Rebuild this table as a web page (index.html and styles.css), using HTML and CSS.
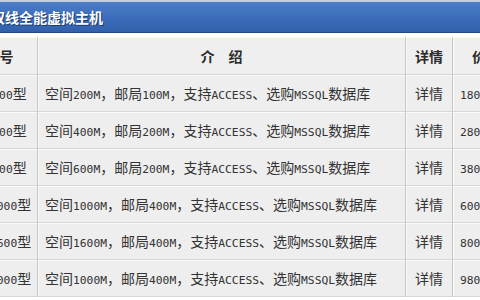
FILE: index.html
```html
<!DOCTYPE html>
<html lang="zh-CN">
<head>
<meta charset="utf-8">
<title>双线全能虚拟主机</title>
<link rel="stylesheet" href="styles.css">
</head>
<body>
<div class="page">
  <div class="titlebar"><span class="title">双线全能虚拟主机</span></div>
  <table class="plans">
    <thead>
      <tr>
        <th class="c-name">型号</th>
        <th class="c-desc">介　绍</th>
        <th class="c-more">详情</th>
        <th class="c-price">价格</th>
      </tr>
    </thead>
    <tbody>
      <tr><td class="c-name">经济<span class="en">200</span>型</td><td class="c-desc">空间<span class="en">200M</span>，邮局<span class="en">100M</span>，支持<span class="en">ACCESS</span>、选购<span class="en">MSSQL</span>数据库</td><td class="c-more">详情</td><td class="c-price"><span class="en">180</span>元/年</td></tr>
      <tr><td class="c-name">经济<span class="en">400</span>型</td><td class="c-desc">空间<span class="en">400M</span>，邮局<span class="en">200M</span>，支持<span class="en">ACCESS</span>、选购<span class="en">MSSQL</span>数据库</td><td class="c-more">详情</td><td class="c-price"><span class="en">280</span>元/年</td></tr>
      <tr><td class="c-name">经济<span class="en">600</span>型</td><td class="c-desc">空间<span class="en">600M</span>，邮局<span class="en">200M</span>，支持<span class="en">ACCESS</span>、选购<span class="en">MSSQL</span>数据库</td><td class="c-more">详情</td><td class="c-price"><span class="en">380</span>元/年</td></tr>
      <tr><td class="c-name">商务<span class="en">1000</span>型</td><td class="c-desc">空间<span class="en">1000M</span>，邮局<span class="en">400M</span>，支持<span class="en">ACCESS</span>、选购<span class="en">MSSQL</span>数据库</td><td class="c-more">详情</td><td class="c-price"><span class="en">600</span>元/年</td></tr>
      <tr><td class="c-name">商务<span class="en">1600</span>型</td><td class="c-desc">空间<span class="en">1600M</span>，邮局<span class="en">400M</span>，支持<span class="en">ACCESS</span>、选购<span class="en">MSSQL</span>数据库</td><td class="c-more">详情</td><td class="c-price"><span class="en">800</span>元/年</td></tr>
      <tr><td class="c-name">企业<span class="en">1000</span>型</td><td class="c-desc">空间<span class="en">1000M</span>，邮局<span class="en">400M</span>，支持<span class="en">ACCESS</span>、选购<span class="en">MSSQL</span>数据库</td><td class="c-more">详情</td><td class="c-price"><span class="en">980</span>元/年</td></tr>
    </tbody>
  </table>
</div>
</body>
</html>
```

FILE: styles.css
```css
html, body {
  margin: 0;
  padding: 0;
  background: #ffffff;
  overflow: hidden;
}

.page {
  width: 480px;
  height: 300px;
  overflow: hidden;
  font-family: "Noto Sans CJK SC", "Noto Sans", sans-serif;
}

.titlebar {
  height: 30px;
  border-top: 2px solid #c3cfdf;
  border-bottom: 1px solid #24477d;
  background: linear-gradient(#4a7ec6, #3a6ab8 60%, #3160ab);
  display: flex;
  align-items: center;
  margin-bottom: 4px;
  overflow: hidden;
}

.title {
  margin-left: -9px;
  color: #ffffff;
  font-size: 14px;
  font-weight: bold;
  white-space: nowrap;
  text-shadow: 1px 1px 0 #1d3a6a;
}

.plans {
  border-collapse: separate;
  border-spacing: 0;
  margin-left: -38px;
  table-layout: fixed;
  width: 584px;
  font-size: 14px;
  color: #333333;
}

.plans .en {
  font-family: "DejaVu Sans Mono", monospace;
  font-size: 11.3px;
}

.plans th,
.plans td {
  background: #eeeeee;
  border-right: 1px solid #c6c6c6;
  border-bottom: 1px solid #d6d6d6;
  box-shadow: inset 1px 1px 0 #fbfbfb;
  padding: 0;
  white-space: nowrap;
  overflow: hidden;
}

.plans th {
  height: 37px;
  font-weight: bold;
  color: #2b2b2b;
  background: #efefef;
}

.plans td {
  height: 36px;
  text-align: center;
}

.plans th.c-name { width: 75px; }
.plans td.c-name { padding-right: 8px; }
.plans th.c-desc { width: 367px; text-align: center; }
.plans td.c-desc { text-align: left; padding-left: 7px; }
.plans .c-more { width: 46px; text-align: center; }
.plans .c-price { width: 92px; text-align: left; padding-left: 7px; }
.plans th.c-price { padding-left: 19px; }
```
